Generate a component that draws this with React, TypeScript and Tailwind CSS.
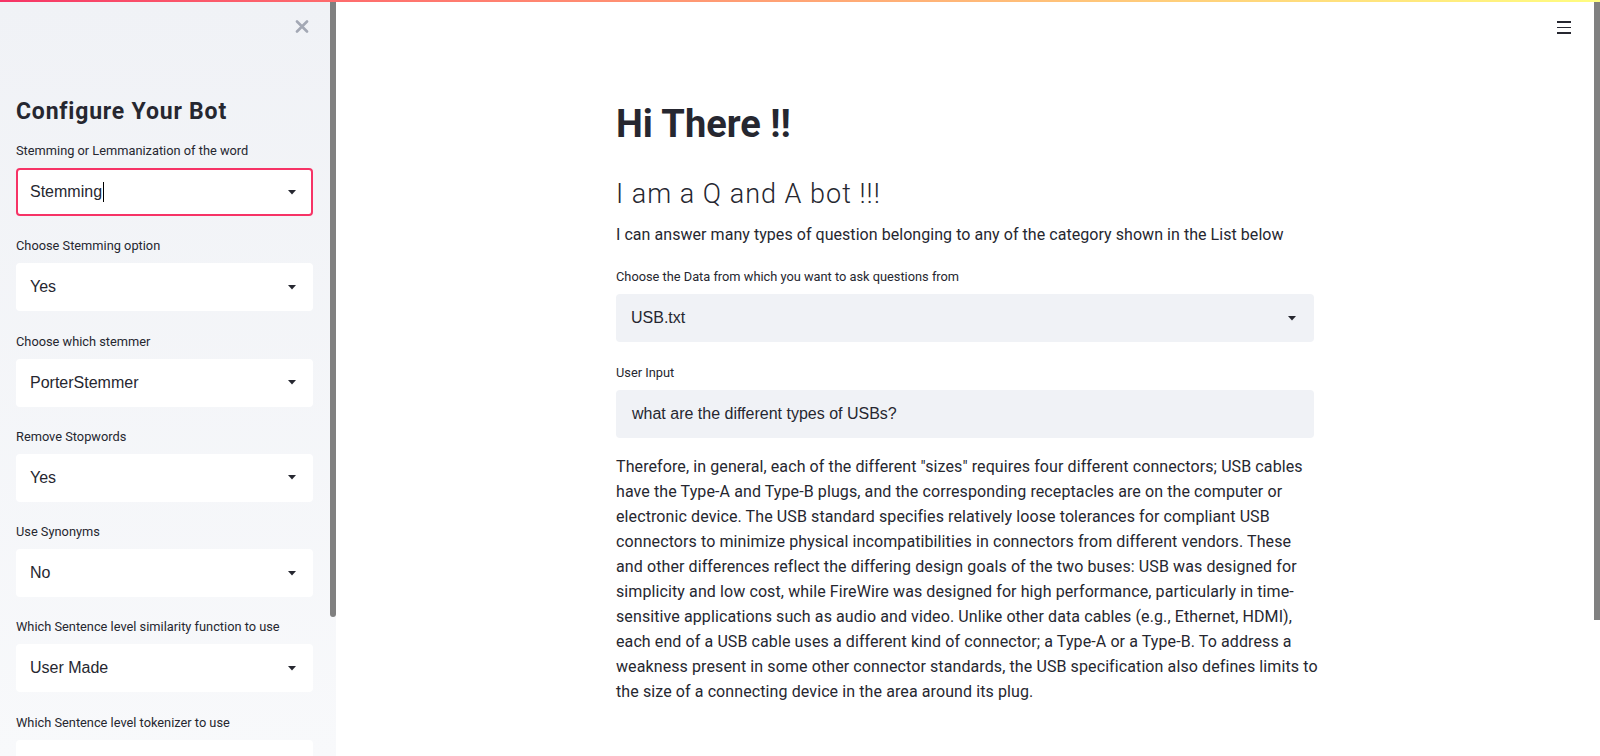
import React from "react";

const Caret = () => (
  <svg width="8" height="5" viewBox="0 0 8 5" className="shrink-0">
    <path d="M0 0H8L4 4.5Z" fill="#262730" />
  </svg>
);

type SideSel = { label: string; value: string; focused?: boolean };

const sideItems: SideSel[] = [
  { label: "Stemming or Lemmanization of the word", value: "Stemming", focused: true },
  { label: "Choose Stemming option", value: "Yes" },
  { label: "Choose which stemmer", value: "PorterStemmer" },
  { label: "Remove Stopwords", value: "Yes" },
  { label: "Use Synonyms", value: "No" },
  { label: "Which Sentence level similarity function to use", value: "User Made" },
  { label: "Which Sentence level tokenizer to use", value: "" },
];

const para = [
  'Therefore, in general, each of the different "sizes" requires four different connectors; USB cables',
  "have the Type-A and Type-B plugs, and the corresponding receptacles are on the computer or",
  "electronic device. The USB standard specifies relatively loose tolerances for compliant USB",
  "connectors to minimize physical incompatibilities in connectors from different vendors. These",
  "and other differences reflect the differing design goals of the two buses: USB was designed for",
  "simplicity and low cost, while FireWire was designed for high performance, particularly in time-",
  "sensitive applications such as audio and video. Unlike other data cables (e.g., Ethernet, HDMI),",
  "each end of a USB cable uses a different kind of connector; a Type-A or a Type-B. To address a",
  "weakness present in some other connector standards, the USB specification also defines limits to",
  "the size of a connecting device in the area around its plug.",
];

export default function App() {
  return (
    <div
      className="relative flex h-[756px] w-full overflow-hidden bg-white text-[#262730]"
      style={{ fontFamily: "Roboto, 'Noto Sans', sans-serif" }}
    >
      {/* Sidebar */}
      <aside className="flex w-[336px] shrink-0 bg-gradient-to-b from-[#f0f2f6] to-[#f8f9fb]">
        <div className="w-[330px] pl-4 pr-[17px]">
          <div className="flex h-[52px] items-center justify-end pr-[4px]">
            <svg width="14" height="13" viewBox="0 0 14 13">
              <path d="M2 1.5L12 11.5M12 1.5L2 11.5" stroke="#a3a8b4" strokeWidth="2.6" strokeLinecap="round" />
            </svg>
          </div>
          <h2 className="mt-[46px] text-[23px] font-bold leading-[28px] tracking-[0.8px]">Configure Your Bot</h2>
          <div className="mt-[15px]">
            {sideItems.map((it, i) => (
              <div key={i} className="mb-[20.3px]">
                <div className="h-[20px] text-[12.8px] leading-[20px]">{it.label}</div>
                <div
                  className={`mt-[7px] flex h-[48px] items-center justify-between rounded-[4px] border-2 bg-white pl-[12px] pr-[15px] ${
                    it.focused ? "border-[#f63366]" : "border-white"
                  }`}
                >
                  <div
                    className="flex items-center text-[16px] text-[#262730]"
                    style={{ fontFamily: "'Liberation Sans', Arial, sans-serif" }}
                  >
                    {it.value}
                    {it.focused && <span className="ml-[1px] inline-block h-[20px] w-[1px] bg-black" />}
                  </div>
                  {it.value && <Caret />}
                </div>
              </div>
            ))}
          </div>
        </div>
        <div className="w-[6px] shrink-0">
          <div className="h-[617px] w-[6px] rounded-b-[3px] bg-[#808080]" />
        </div>
      </aside>

      {/* Main */}
      <main className="relative flex flex-1">
        <div className="flex-1">
          <div className="mx-auto w-[698px] pt-[100px]">
            <h1 className="text-[38px] font-bold leading-[48px]">Hi There !!</h1>
            <h2 className="mt-[28px] text-[27px] font-light leading-[36px] tracking-[1px]">I am a Q and A bot !!!</h2>
            <p className="mt-[10px] text-[16px] leading-[25px] tracking-[0.05px]">
              I can answer many types of question belonging to any of the category shown in the List below
            </p>
            <div className="mt-[20px] h-[20px] text-[12.8px] leading-[20px]">
              Choose the Data from which you want to ask questions from
            </div>
            <div className="mt-[7px] flex h-[48px] items-center justify-between rounded-[4px] bg-[#f0f2f6] pl-[15px] pr-[18px]">
              <span className="text-[16px]" style={{ fontFamily: "'Liberation Sans', Arial, sans-serif" }}>
                USB.txt
              </span>
              <Caret />
            </div>
            <div className="mt-[21px] h-[20px] text-[12.8px] leading-[20px]">User Input</div>
            <div className="mt-[7px] flex h-[48px] items-center rounded-[4px] bg-[#f0f2f6] pl-[16px]">
              <span className="text-[16px]" style={{ fontFamily: "'Liberation Sans', Arial, sans-serif" }}>
                what are the different types of USBs?
              </span>
            </div>
            <p className="mt-[16px] text-[16px] leading-[25px] tracking-[0.1px]">
              {para.map((l, i) => (
                <span key={i} className="block whitespace-nowrap">
                  {l}
                </span>
              ))}
            </p>
          </div>
        </div>
        <div className="w-[6px] shrink-0">
          <div className="h-[620px] w-[6px] bg-[#808080]" />
        </div>

        {/* hamburger */}
        <div className="absolute right-[29px] top-[21px] flex w-[14px] flex-col gap-[4px]">
          <span className="block h-[1.5px] w-[14px] bg-[#262730]" />
          <span className="block h-[1.5px] w-[14px] bg-[#262730]" />
          <span className="block h-[1.5px] w-[14px] bg-[#262730]" />
        </div>
      </main>

      {/* decoration line */}
      <div className="absolute left-0 right-0 top-0 h-[2px] bg-gradient-to-r from-[#f63366] to-[#fffd80]" />
    </div>
  );
}
